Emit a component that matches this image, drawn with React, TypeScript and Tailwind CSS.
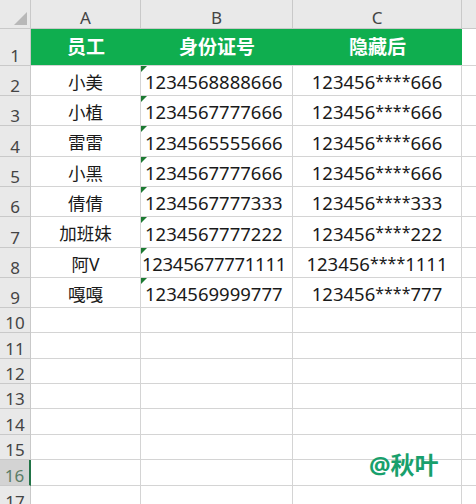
import React from 'react';

const font = { fontFamily: '"Noto Sans", "Noto Sans CJK SC", sans-serif' };

const data = [
  { name: '小美', id: '1234568888666', hid: '123456****666' },
  { name: '小植', id: '1234567777666', hid: '123456****666' },
  { name: '雷雷', id: '1234565555666', hid: '123456****666' },
  { name: '小黑', id: '1234567777666', hid: '123456****666' },
  { name: '倩倩', id: '1234567777333', hid: '123456****333' },
  { name: '加班妹', id: '1234567777222', hid: '123456****222' },
  { name: '阿V', id: '12345677771111', hid: '123456****1111' },
  { name: '嘎嘎', id: '1234569999777', hid: '123456****777' },
];

const dataHeights = ['h-[30px]', 'h-[30px]', 'h-[31px]', 'h-[30px]', 'h-[30px]', 'h-[31px]', 'h-[30px]', 'h-[30px]'];
const emptyRows = [
  { n: 10, h: 'h-[25px]' },
  { n: 11, h: 'h-[26px]' },
  { n: 12, h: 'h-[25px]' },
  { n: 13, h: 'h-[25px]' },
  { n: 14, h: 'h-[26px]' },
  { n: 15, h: 'h-[25px]' },
  { n: 16, h: 'h-[26px]' },
  { n: 17, h: 'h-[26px]' },
];

function RowHead({ n, selected }: { n: number; selected?: boolean }) {
  return (
    <div
      className={
        'w-[31px] shrink-0 flex items-end justify-center pb-[1px] border-b border-r border-[#c9c9c9] text-[17px] leading-none ' +
        (selected ? 'bg-[#d3d3d3] text-[#5b7d66] border-r-2 border-r-[#217346]' : 'bg-[#e9e9e9] text-[#444]')
      }
    >
      {n}
    </div>
  );
}

export default function App() {
  return (
    <div className="w-[476px] h-[504px] overflow-hidden bg-white" style={font}>
      {/* column headers */}
      <div className="flex h-[29px]">
        <div className="w-[31px] shrink-0 relative bg-[#e9e9e9] border-b border-r border-[#c9c9c9]">
          <div className="absolute right-[3px] bottom-[3px] w-0 h-0 border-l-[13px] border-l-transparent border-b-[13px] border-b-[#b8b8b8]" />
        </div>
        {['A', 'B', 'C'].map((c, i) => (
          <div
            key={c}
            className={
              'shrink-0 flex items-end justify-center pb-[2px] bg-[#e9e9e9] border-b border-r border-[#c9c9c9] text-[17px] text-[#444] leading-none ' +
              (i === 0 ? 'w-[110px]' : i === 1 ? 'w-[152px]' : 'w-[169px]')
            }
          >
            {c}
          </div>
        ))}
        <div className="flex-1 bg-[#e9e9e9] border-b border-[#c9c9c9]" />
      </div>

      {/* header row */}
      <div className="flex h-[37px]">
        <RowHead n={1} />
        <div className="w-[431px] shrink-0 flex bg-[#0fae4f] border-b border-[#d4d4d4] text-white font-bold text-[19px]">
          <div className="w-[110px] flex items-center justify-center">员工</div>
          <div className="w-[152px] flex items-center justify-center">身份证号</div>
          <div className="w-[169px] flex items-center justify-center">隐藏后</div>
        </div>
        <div className="flex-1 border-b border-[#d4d4d4]" />
      </div>

      {data.map((r, i) => (
        <div key={i} className={'flex ' + dataHeights[i]}>
          <RowHead n={i + 2} />
          <div className="w-[110px] shrink-0 flex items-center justify-center pt-[3px] border-b border-r border-[#d4d4d4] text-[17.5px] text-[#1a1a1a]">
            {r.name}
          </div>
          <div
            className={
              'w-[152px] shrink-0 relative flex items-center pt-[3px] border-b border-r border-[#d4d4d4] text-[18.5px] text-[#1a1a1a] whitespace-nowrap ' +
              (r.id.length > 13 ? 'pl-[1px] tracking-[-0.3px]' : 'pl-[4px]')
            }
          >
            <div className="absolute left-0 top-0 w-0 h-0 border-t-[6px] border-t-[#1c7a32] border-r-[6px] border-r-transparent" />
            {r.id}
          </div>
          <div className="w-[169px] shrink-0 flex items-center justify-center pt-[3px] border-b border-r border-[#d4d4d4] text-[18.5px] text-[#1a1a1a] whitespace-nowrap">
            {r.hid.slice(0, 6)}
            <span className="text-[16px] -mt-[3px]">****</span>
            {r.hid.slice(10)}
          </div>
          <div className="flex-1 border-b border-[#d4d4d4]" />
        </div>
      ))}

      {emptyRows.map((r) => (
        <div key={r.n} className={'flex ' + r.h}>
          <RowHead n={r.n} selected={r.n === 16} />
          <div className="w-[110px] shrink-0 border-b border-r border-[#d4d4d4]" />
          <div className="w-[152px] shrink-0 border-b border-r border-[#d4d4d4]" />
          <div className="w-[169px] shrink-0 relative border-b border-r border-[#d4d4d4]">
            {r.n === 16 && (
              <span className="absolute left-[76px] top-[-7px] text-[24px] font-bold text-[#18a06c] whitespace-nowrap leading-none">
                @秋叶
              </span>
            )}
          </div>
          <div className="flex-1 border-b border-[#d4d4d4]" />
        </div>
      ))}
    </div>
  );
}
